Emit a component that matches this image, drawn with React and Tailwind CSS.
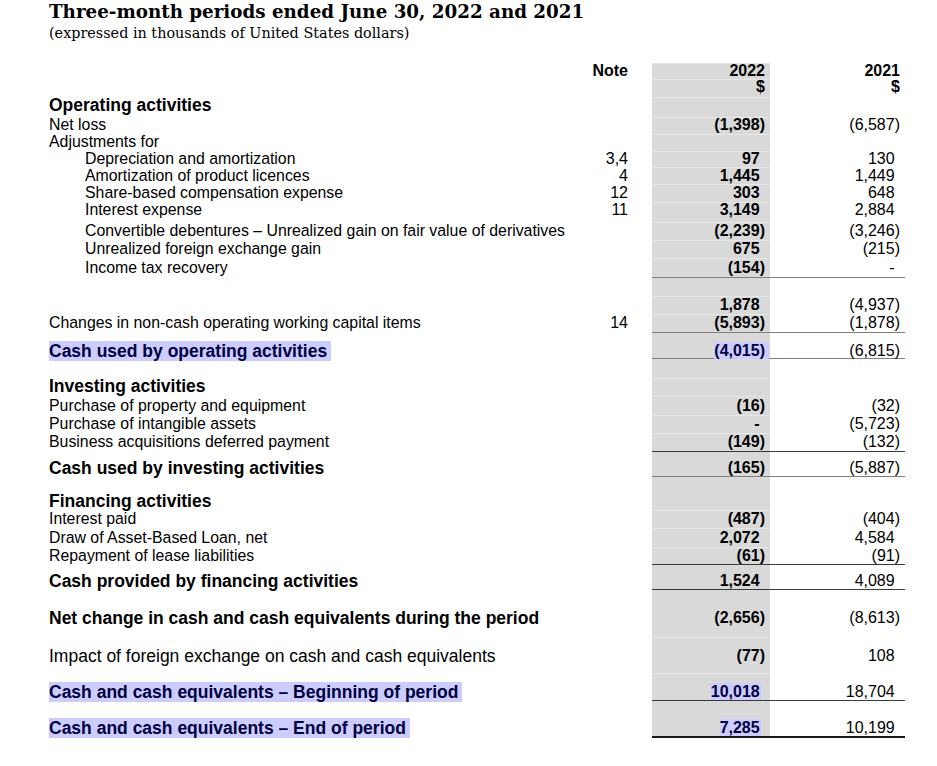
const SANS = "font-['Liberation_Sans',Arial,sans-serif]";

// pt = text centre - row top - 8 (all cells use a 16px line box)
const rows = [
  { h: 'h-[16px]', pt: 'pt-0', note: 'Note', a: '2022', b: '2021', hdr: true },
  { h: 'h-[18px]', pt: 'pt-0', a: '$', b: '$', hdr: true },
  { h: 'h-[20px]', pt: 'pt-0', label: 'Operating activities', head: true },
  { h: 'h-[17px]', pt: 'pt-0', label: 'Net loss', a: '(1,398)', b: '(6,587)' },
  { h: 'h-[17px]', pt: 'pt-0', label: 'Adjustments for' },
  { h: 'h-[16px]', pt: 'pt-0', label: 'Depreciation and amortization', ind: true, note: '3,4', a: '97', b: '130' },
  { h: 'h-[17px]', pt: 'pt-[1px]', label: 'Amortization of product licences', ind: true, note: '4', a: '1,445', b: '1,449' },
  { h: 'h-[18px]', pt: 'pt-[1px]', label: 'Share-based compensation expense', ind: true, note: '12', a: '303', b: '648' },
  { h: 'h-[20px]', pt: 'pt-0', label: 'Interest expense', ind: true, note: '11', a: '3,149', b: '2,884' },
  { h: 'h-[18px]', pt: 'pt-[1px]', label: 'Convertible debentures – Unrealized gain on fair value of derivatives', ind: true, a: '(2,239)', b: '(3,246)' },
  { h: 'h-[18px]', pt: 'pt-[1px]', label: 'Unrealized foreign exchange gain', ind: true, a: '675', b: '(215)' },
  { h: 'h-[20px]', pt: 'pt-[2px]', label: 'Income tax recovery', ind: true, a: '(154)', b: '-', line: 'gray' },
  { h: 'h-[18px]', pt: 'pt-0' },
  { h: 'h-[18px]', pt: 'pt-[1px]', a: '1,878', b: '(4,937)' },
  { h: 'h-[19px]', pt: 'pt-[1px]', label: 'Changes in non-cash operating working capital items', note: '14', a: '(5,893)', b: '(1,878)', line: 'gray' },
  { h: 'h-[26px]', pt: 'pt-[10px]', label: 'Cash used by operating activities', total: true, hl: true, ahl: true, a: '(4,015)', b: '(6,815)', line: 'gray' },
  { h: 'h-[19px]', pt: 'pt-0' },
  { h: 'h-[18px]', pt: 'pt-0', label: 'Investing activities', head: true },
  { h: 'h-[19px]', pt: 'pt-[2px]', label: 'Purchase of property and equipment', a: '(16)', b: '(32)' },
  { h: 'h-[18px]', pt: 'pt-[1px]', label: 'Purchase of intangible assets', a: '-', b: '(5,723)' },
  { h: 'h-[19px]', pt: 'pt-[1px]', label: 'Business acquisitions deferred payment', a: '(149)', b: '(132)', line: 'dark' },
  { h: 'h-[25px]', pt: 'pt-[8px]', label: 'Cash used by investing activities', total: true, a: '(165)', b: '(5,887)', line: 'gray' },
  { h: 'h-[33px]', pt: 'pt-[16px]', label: 'Financing activities', head: true },
  { h: 'h-[18px]', pt: 'pt-[1px]', label: 'Interest paid', a: '(487)', b: '(404)' },
  { h: 'h-[19px]', pt: 'pt-[2px]', label: 'Draw of Asset-Based Loan, net', a: '2,072', b: '4,584' },
  { h: 'h-[18px]', pt: 'pt-[1px]', label: 'Repayment of lease liabilities', a: '(61)', b: '(91)', line: 'dark' },
  { h: 'h-[25px]', pt: 'pt-[8px]', label: 'Cash provided by financing activities', total: true, a: '1,524', b: '4,089', line: 'dark' },
  { h: 'h-[47px]', pt: 'pt-[20px]', label: 'Net change in cash and cash equivalents during the period', total: true, a: '(2,656)', b: '(8,613)' },
  { h: 'h-[36px]', pt: 'pt-[11px]', label: 'Impact of foreign exchange on cash and cash equivalents', big: true, a: '(77)', b: '108' },
  { h: 'h-[28px]', pt: 'pt-[11px]', label: 'Cash and cash equivalents – Beginning of period', total: true, hl: true, ahl: true, a: '10,018', b: '18,704', line: 'dark' },
  { h: 'h-[37px]', pt: 'pt-[19px]', label: 'Cash and cash equivalents – End of period', total: true, hl: true, ahl: true, a: '7,285', b: '10,199', line: 'end' },
];

const lineCls = {
  gray: 'border-b border-[#808080]',
  dark: 'border-b border-[#3a3a3a]',
  end: 'border-b-2 border-[#1a1a1a]',
};

// numbers without a closing paren still line up on the digits
function Amount({ v, hdr, hl }) {
  if (v == null) return null;
  const paren = v.endsWith(')') || hdr;
  return (
    <span className="whitespace-nowrap">
      <span className={hl ? `bg-[#ccccff] text-[#000040] ${paren ? 'pr-[4px] -mr-[4px]' : 'pr-[1px] -mr-[1px]'}` : ''}>{v}</span>
      {!paren && <span className="invisible">)</span>}
    </span>
  );
}

function Row({ r, prevLine }) {
  const labelCls = r.head || r.total
    ? 'text-[17.5px] font-bold'
    : r.big
      ? 'text-[17.5px]'
      : 'text-[15.85px]';
  const ln = r.line ? lineCls[r.line] : '';
  return (
    <div className={`flex ${r.h} leading-[16px] text-black`}>
      <div className={`w-[531px] ${r.pt} ${r.ind ? 'pl-[36px]' : ''} whitespace-nowrap`}>
        {r.label && (
          <span className={`${labelCls} ${r.hl ? 'bg-[#ccccff] text-[#000040] pr-[4px]' : ''}`}>{r.label}</span>
        )}
      </div>
      <div className={`w-[48px] ${r.pt} text-right text-[16px] ${r.hdr ? 'font-bold' : ''}`}>{r.note}</div>
      <div className="w-[24px]" />
      <div className={`w-[118px] ${r.pt} pr-[5px] text-right text-[16px] font-bold bg-[#d9d9d9] ${ln} ${prevLine ? '' : 'shadow-[inset_0_1px_0_#e6e6e6]'}`}>
        <Amount v={r.a} hdr={r.hdr} hl={r.ahl} />
      </div>
      <div className={`w-[135px] ${r.pt} pr-[5px] text-right text-[16px] ${r.hdr ? 'font-bold' : ''} ${ln}`}>
        <Amount v={r.b} hdr={r.hdr} />
      </div>
    </div>
  );
}

export default function App() {
  return (
    <div className={`w-[937px] h-[766px] bg-white overflow-hidden pl-[49px] ${SANS}`}>
      <div className="h-[63px] pt-[1px]">
        <h1 className="font-['DejaVu_Serif',Georgia,serif] font-bold text-[18.3px] leading-[22px] text-black whitespace-nowrap">
          Three-month periods ended June 30, 2022 and 2021
        </h1>
        <p className="font-['DejaVu_Serif',Georgia,serif] text-[14.4px] leading-[21px] text-black whitespace-nowrap">
          (expressed in thousands of United States dollars)
        </p>
      </div>
      {rows.map((r, i) => (
        <Row key={i} r={r} prevLine={i > 0 && !!rows[i - 1].line} />
      ))}
    </div>
  );
}
